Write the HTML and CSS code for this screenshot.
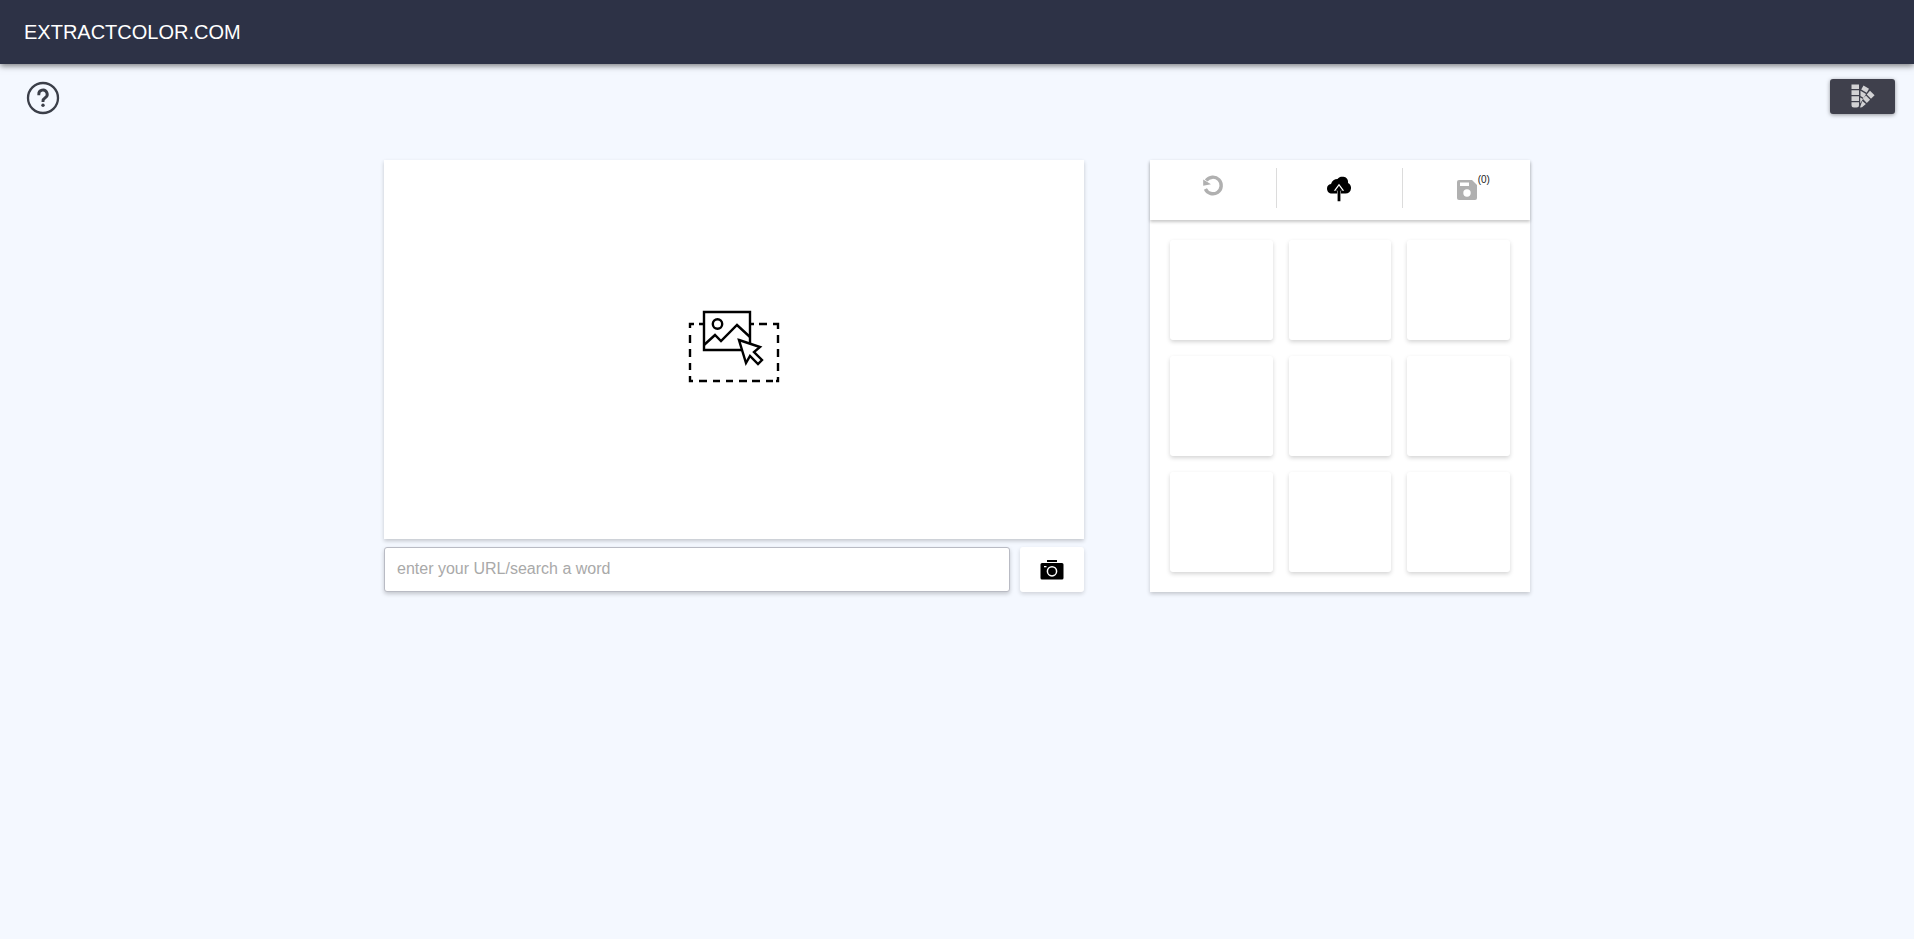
FILE: index.html
```html
<!DOCTYPE html>
<html lang="en">
<head>
<meta charset="utf-8">
<meta name="viewport" content="width=device-width, initial-scale=1">
<title>extractcolor.com</title>
<link rel="stylesheet" href="styles.css">
</head>
<body>
<header class="site-header"><a class="brand" href="#">EXTRACTCOLOR.COM</a></header>
<nav class="actions">
  <button class="help" type="button" aria-label="Help">
    <svg width="34" height="34" viewBox="0 0 34 34" fill="none" stroke="#3b3f49" stroke-width="2.300"><circle cx="17" cy="17" r="15"/><path stroke-width="2.900" d="M12.800 14.200v-.6a4.200 4.200 0 1 1 6.400 3.200c-1.500 1-2.200 1.600-2.200 3.200v.9"/><circle cx="17" cy="24.200" r="1.700" fill="#3b3f49" stroke="none"/></svg>
  </button>
  <button class="palette" type="button" aria-label="Palettes">
    <svg width="26" height="26" viewBox="0 0 26 26" fill="#d2d2d4"><path d="M1.500 0.500h7.500v4.500h-7.500zM1.500 6.200h7.500v4.800h-7.500zM1.500 12.200h7.500v4.800h-7.500zM1.500 18.200h7.500v2.800a2.500 2.500 0 0 1-2.500 2.500h-2.500a2.500 2.500 0 0 1-2.500-2.500z"/><path d="M13.500 1.500l5.500 3.200-2.300 4-5.500-3.200zM10.500 6.800l5.500 3.200-2.300 4-3.200-1.900zM20 6.800l4.600 4.500-3.600 3.500-4.300-4.300zM15.900 11.500l4.200 4.200-3.300 3.300-4-4.300zM10.200 13.400l2.800 1.600-2.800 4.400zM12.200 17l3.700 3-3.900 3.300-2 .2z"/></svg>
  </button>
</nav>
<main class="workspace">
  <section class="source">
    <button class="dropzone" type="button" aria-label="Choose or drop an image">
      <svg width="92" height="74" viewBox="0 0 92 74" fill="none" stroke="#000" stroke-width="2.400"><path d="M15 14h-4M6 14H2v4M2 25v8M2 39v8M2 53v7M2 66v5h3M11 71h8M25 71h7M38 71h7M51 71h8M64 71h8M78 71h7M88 71h2v-4M90 61v-8M90 47v-8M90 33v-8M90 19v-5h-5M79 14h-8M66 14h-3"/><path d="M16 2h46v38H16z"/><circle cx="29.500" cy="14" r="4.700"/><path d="M16 35l11-10 6 6 16-16 13 12"/><path fill="#fff" stroke-linejoin="miter" d="M51 30l21 7-6 5 8 8-4 4-8-8-4 7z"/></svg>
    </button>
    <form class="search">
      <input class="search-input" type="text" aria-label="URL or search word" placeholder="enter your URL/search a word">
      <button class="camera" type="button" aria-label="Take a photo">
        <svg width="24" height="20" viewBox="0 0 24 20"><path d="M7 0h10v2H7zM2 3h20q1.500 0 1.500 1.500v13.500q0 1.500-1.500 1.500H2Q.5 19.500.5 18V4.500Q.5 3 2 3z"/><circle cx="12" cy="11.300" r="4.600" fill="none" stroke="#fff" stroke-width="1.500"/><path d="M4 6h2.500v1.300H4z" fill="#fff"/></svg>
      </button>
    </form>
  </section>
  <section class="colors">
    <div class="toolbar">
      <button class="tool tool-reset" type="button" aria-label="Reset">
        <svg width="22" height="22" viewBox="0 0 22 22" fill="none" stroke="#b0b0b0" stroke-width="3.400"><path d="M4.200 5.600A8.300 8.300 0 1 1 3.400 14"/><path d="M1.200 4.500v6.300L9 9.300z" fill="#b0b0b0" stroke="none"/></svg>
      </button>
      <button class="tool tool-upload" type="button" aria-label="Upload">
        <svg width="24" height="26" viewBox="0 0 24 26"><path d="M5 17.500C2 17.500 0 15.500 0 12.500c0-2.500 1.500-4 4-4.500C5 4.500 7.500 3 10.500 3 12 1 14 .5 16.500.8c3.200.4 5 3 4.500 6.200 2.200 1.200 3.200 3 3 5.500-.3 3.200-2.500 5-5.500 5z"/><path fill="#fff" d="M12 7.800l-5.200 7h3.400v4h3.600v-4h3.400z"/><path d="M12 9.800l-3.600 4.900h2.200v10.500h2.800V14.700h2.200z"/></svg>
      </button>
      <button class="tool tool-save" type="button" aria-label="Save">
        <span class="save-icon"><svg width="20" height="20" viewBox="0 0 20 20" fill="#b0b0b0"><path d="M2 0h13l5 5v13a2 2 0 0 1-2 2H2a2 2 0 0 1-2-2V2a2 2 0 0 1 2-2z"/><path fill="#fff" d="M3 2.500h9v3.500H3z"/><circle cx="10" cy="13" r="3.700" fill="#fff"/></svg><span class="count">(0)</span></span>
      </button>
    </div>
    <div class="swatches">
      <div class="swatch"></div><div class="swatch"></div><div class="swatch"></div>
      <div class="swatch"></div><div class="swatch"></div><div class="swatch"></div>
      <div class="swatch"></div><div class="swatch"></div><div class="swatch"></div>
    </div>
  </section>
</main>
</body>
</html>
```
FILE: styles.css
```css
* { box-sizing: border-box; }
body {
  margin: 0;
  min-height: 100vh;
  background: #f4f8ff;
  font-family: "Liberation Sans", Arial, sans-serif;
}
button {
  display: flex;
  align-items: center;
  justify-content: center;
  margin: 0;
  padding: 0;
  border: 0;
  background: #fff;
  font-family: inherit;
  cursor: pointer;
}
.site-header {
  display: flex;
  align-items: center;
  height: 64px;
  padding: 0 24px;
  background: #2d3246;
  box-shadow: 0 2px 6px rgba(0, 0, 0, .5);
}
.brand {
  color: #fff;
  font-size: 20px;
  line-height: 24px;
  text-decoration: none;
}
.actions {
  display: flex;
  align-items: flex-start;
  justify-content: space-between;
  padding: 15px 19px 0 26px;
}
.help {
  padding-top: 2px;
  background: transparent;
}
.palette {
  width: 65px;
  height: 35px;
  border-radius: 3px;
  background: #3f404c;
  box-shadow: 0 1px 4px rgba(0, 0, 0, .4);
}
.workspace {
  display: grid;
  grid-template-columns: 700fr 380fr;
  gap: 66px;
  max-width: 1178px;
  margin: 0 auto;
  padding: 45px 16px;
}
.source {
  display: flex;
  flex-direction: column;
  gap: 8px;
}
.dropzone {
  flex: 1;
  padding-bottom: 6px;
  box-shadow: 0 2px 4px rgba(0, 0, 0, .2);
}
.search {
  display: flex;
  gap: 10px;
  height: 45px;
}
.search-input {
  flex: 1;
  min-width: 0;
  padding: 0 12px 2px;
  border: 1px solid #b9bbc4;
  border-radius: 3px;
  background: #fff;
  box-shadow: 0 2px 4px rgba(0, 0, 0, .2);
  font-family: inherit;
  font-size: 16px;
}
.search-input::placeholder { color: #a9a9a9; }
.camera {
  width: 64px;
  border-radius: 3px;
  box-shadow: 0 2px 4px rgba(0, 0, 0, .15);
}
.colors {
  background: #fff;
  box-shadow: 0 2px 4px rgba(0, 0, 0, .2);
}
.toolbar {
  display: grid;
  grid-template-columns: repeat(3, 1fr);
  height: 60px;
  padding: 8px 0 12px;
  box-shadow: 0 2px 3px rgba(0, 0, 0, .22);
}
.tool { border-right: 1px solid #dcdcdc; }
.tool:last-child { border-right: 0; }
.tool-reset { padding-bottom: 4px; }
.tool-upload { padding-top: 2px; }
.tool-save { padding-top: 4px; }
.save-icon {
  position: relative;
  display: flex;
}
.count {
  position: absolute;
  top: -5px;
  left: 21px;
  color: #222;
  font-size: 10px;
  line-height: 10px;
}
.swatches {
  display: grid;
  grid-template-columns: repeat(3, 1fr);
  grid-auto-rows: 100px;
  gap: 16px;
  padding: 20px;
}
.swatch {
  border-radius: 3px;
  background: #fff;
  box-shadow: 0 2px 4px rgba(0, 0, 0, .17);
}
@media (max-width: 800px) {
  .workspace { grid-template-columns: 1fr; gap: 24px; }
  .dropzone { min-height: 380px; }
}
```
